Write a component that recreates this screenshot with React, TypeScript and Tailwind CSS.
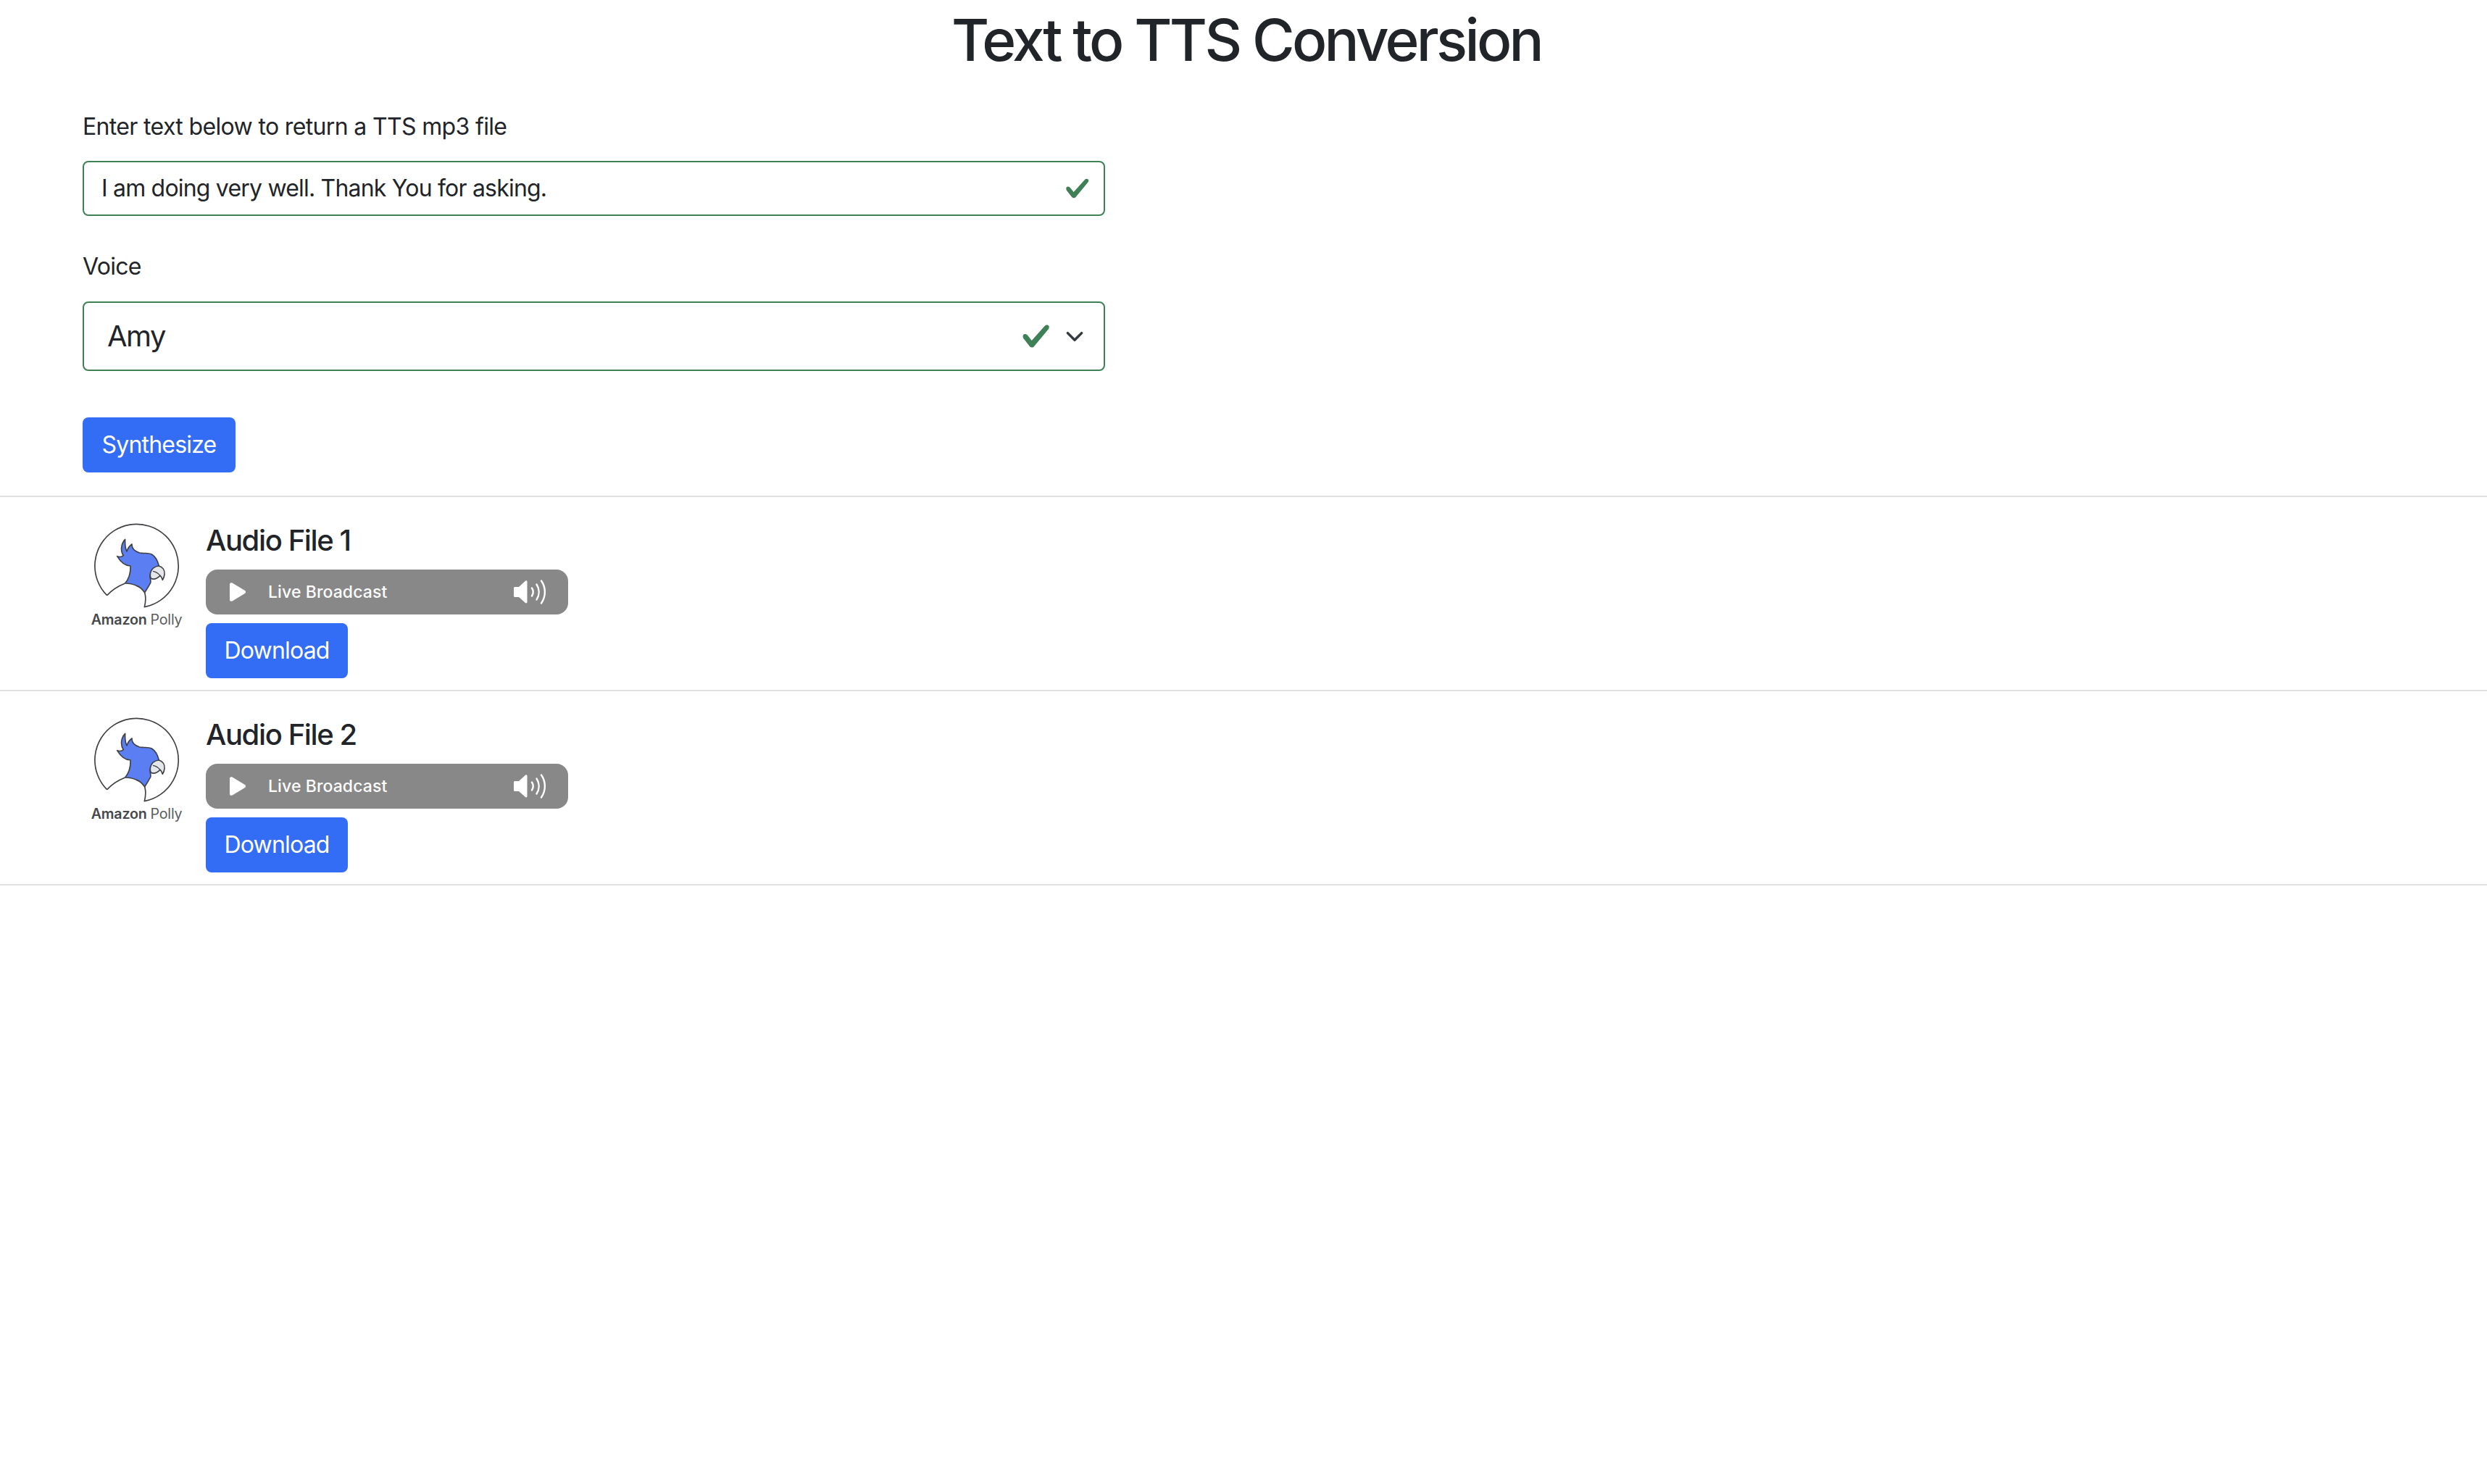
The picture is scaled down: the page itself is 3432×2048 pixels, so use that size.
const font = { fontFamily: "Inter, 'Liberation Sans', sans-serif" };

function Check({ size }: { size: number }) {
  return (
    <svg width={size} height={size} viewBox="0 0 8 8" className="shrink-0">
      <path fill="#3f8157" d="M2.3 6.73.6 4.53c-.4-1.04.46-1.4 1.1-.8l1.1 1.4 3.4-3.8c.6-.63 1.6-.15 1 .8l-3.8 4.6c-.25.3-.72.3-1.1 0z" />
    </svg>
  );
}

function Logo() {
  return (
    <svg width="180" height="180" viewBox="0 0 540 540" className="shrink-0">
      <path d="M140 362A173 173 0 1 1 295 410C300 390 302 370 296 350" fill="none" stroke="#3f4145" strokeWidth="5" strokeLinejoin="round" />
      <path d="M140 362C160 340 190 322 215 312" fill="none" stroke="#3f4145" strokeWidth="5" />
      <path
        d="M215 312C232 292 238 265 237 240C215 240 195 222 182 200C192 204 202 202 208 197C196 180 196 150 215 130C214 150 216 168 222 180C226 168 232 158 243 150C242 165 250 178 275 186C295 190 310 184 325 192C342 202 350 220 355 240C335 245 318 265 318 285C320 295 322 305 320 310C312 325 304 338 296 350C285 335 275 326 262 322C245 314 230 312 215 312Z"
        fill="#5b7ff2"
        stroke="#3f4145"
        strokeWidth="5"
        strokeLinejoin="round"
      />
      <path
        d="M355 240C370 245 380 258 378 275C377 285 374 292 370 298C368 290 365 284 360 280C350 290 335 298 322 292C316 280 318 262 330 250C338 244 346 240 355 240Z"
        fill="#e6e7ea"
        stroke="#3f4145"
        strokeWidth="5"
        strokeLinejoin="round"
      />
      <path d="M330 262C342 264 352 270 360 280" fill="none" stroke="#3f4145" strokeWidth="4" />
      <text x="74" y="483" fontSize="59" fill="#46484c" letterSpacing="-0.5" fontFamily="Inter, 'Liberation Sans', sans-serif">
        <tspan fontWeight="600">Amazon</tspan>
        <tspan dx="14" fontWeight="400" fill="#5b5d61">Polly</tspan>
      </text>
    </svg>
  );
}

function Player() {
  return (
    <div className="flex items-center h-[62px] w-[500px] rounded-[16px] bg-[#888888] text-white pl-[32px] pr-[30px]">
      <svg width="24" height="28" viewBox="0 0 24 28" className="shrink-0">
        <path d="M1 3.5C1 1.2 3 .6 4.6 1.6L22 12c1.4.9 1.4 3 0 3.9L4.6 26.4C3 27.4 1 26.8 1 24.500z" fill="#fff" />
      </svg>
      <span className="ml-[30px] text-[23px] font-medium leading-none tracking-[0.1px]">Live Broadcast</span>
      <svg width="46" height="34" viewBox="0 0 46 34" className="ml-auto shrink-0">
        <path d="M1 11.500c0-.8.6-1.500 1.500-1.500H8L17 1.800c1-.9 2.500-.3 2.500 1V31c0 1.300-1.500 2-2.500 1L8 24H2.500C1.600 24 1 23.300 1 22.500z" fill="#fff" />
        <path d="M26 11.500c2.200 3.500 2.200 7.500 0 11M32.500 6.500c4.200 6.500 4.200 14.500 0 21M39 1.500c6.500 9.500 6.500 21.500 0 31" fill="none" stroke="#fff" strokeWidth="2.400" strokeLinecap="round" />
      </svg>
    </div>
  );
}

function AudioRow({ title }: { title: string }) {
  return (
    <div className="flex h-[268px] border-b-2 border-[#e0e0e0]">
      <div className="w-[284px] pl-[101px] pt-[15px]">
        <Logo />
      </div>
      <div className="flex flex-col items-start pt-[36px]">
        <h4 className="text-[40px] font-medium leading-[48px] tracking-[-1.4px] text-[#212529]">{title}</h4>
        <div className="mt-[16px]">
          <Player />
        </div>
        <button className="mt-[12px] h-[76px] w-[196px] rounded-[8px] bg-[#336cf5] text-[32px] tracking-[-0.8px] text-white">Download</button>
      </div>
    </div>
  );
}

export default function App() {
  return (
    <div className="min-h-screen bg-white text-[#212529]" style={font}>
      <h1 className="text-center text-[80px] font-medium leading-[96px] tracking-[-3.7px] pl-[8px] pt-[7px]">Text to TTS Conversion</h1>

      <div className="w-[1525px] pl-[114px] mt-[48px]">
        <label className="block text-[32px] leading-[48px] tracking-[-0.65px]">Enter text below to return a TTS mp3 file</label>
        <div className="mt-[23px] flex items-center h-[76px] rounded-[8px] border-2 border-[#3f8157] pl-[24px] pr-[18px]">
          <span className="text-[32px] tracking-[-0.8px]">I am doing very well. Thank You for asking.</span>
          <span className="ml-auto"><Check size={36} /></span>
        </div>

        <label className="block mt-[46px] text-[32px] leading-[48px] tracking-[-0.7px]">Voice</label>
        <div className="mt-[24px] flex items-center h-[96px] rounded-[8px] border-2 border-[#3f8157] pl-[32px] pr-[26px]">
          <span className="text-[40px] tracking-[-1.5px]">Amy</span>
          <span className="ml-auto"><Check size={42} /></span>
          <svg width="28" height="28" viewBox="0 0 16 16" className="ml-[18px]">
            <path d="M2.500 5.500 8 11l5.500-5.500" fill="none" stroke="#343a40" strokeWidth="2" strokeLinecap="round" strokeLinejoin="round" />
          </svg>
        </div>

        <button className="mt-[64px] block h-[76px] w-[211px] rounded-[8px] bg-[#336cf5] text-[32px] tracking-[-0.8px] text-white">Synthesize</button>
      </div>

      <div className="mt-[32px] border-t-2 border-[#e0e0e0]">
        <AudioRow title="Audio File 1" />
        <AudioRow title="Audio File 2" />
      </div>
    </div>
  );
}
